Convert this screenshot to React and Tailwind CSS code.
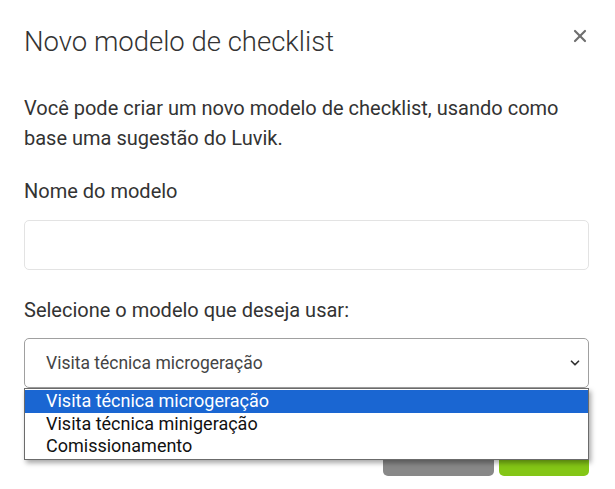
import { X, ChevronDown } from 'lucide-react'

const OPTIONS = ['Visita técnica microgeração', 'Visita técnica minigeração', 'Comissionamento']

export default function App() {
  return (
    <div className="w-[615px] h-[489px] bg-white overflow-hidden font-['Roboto',sans-serif] text-[#333]">
      <div className="pl-6 pr-[26px] pt-[24px]">
        {/* header */}
        <div className="flex items-start justify-between">
          <h1 className="text-[27.5px] font-light leading-[36px] text-[#333]">Novo modelo de checklist</h1>
          <button className="mt-[2px] -mr-[1px] text-[#6f6f6f]">
            <X size={20} strokeWidth={2.6} />
          </button>
        </div>

        <p className="mt-[33px] text-[20px] leading-[30px] text-[#333]">
          Você pode criar um novo modelo de checklist, usando como base uma sugestão do Luvik.
        </p>

        <label className="block mt-[23px] text-[20px] leading-[30px]">Nome do modelo</label>
        <div className="mt-[14px] h-[50px] border border-[#e3e3e3] rounded-[5px]" />

        <label className="block mt-[25px] text-[20px] leading-[30px]">Selecione o modelo que deseja usar:</label>

        <div className="relative mt-[13px]">
          <div className="h-[50px] border border-[#a0a0a0] rounded-[5px] flex items-center justify-between pl-[21px] pr-[6px] text-[17.5px] text-[#444]">
            <span>Visita técnica microgeração</span>
            <ChevronDown size={14} strokeWidth={3} className="text-[#333]" />
          </div>

          {/* open option list */}
          <div className="absolute left-0 right-0 top-[50px] z-10 bg-white border border-[#6b6b6b] shadow-[2px_3px_5px_rgba(0,0,0,0.35)] py-[1px] text-[18px] leading-[22.5px] text-[#111]">
            {OPTIONS.map((o, i) => (
              <div key={o} className={`pl-[21px] ${i === 0 ? 'bg-[#1a66d2] text-white' : ''}`}>{o}</div>
            ))}
          </div>

          {/* footer buttons, mostly hidden behind the list */}
          <div className="flex justify-end gap-[5px] mt-[52px]">
            <button className="w-[111px] h-[36px] rounded-[5px] bg-[#888]" />
            <button className="w-[90px] h-[36px] rounded-[5px] bg-[#84c616]" />
          </div>
        </div>
      </div>
    </div>
  )
}
